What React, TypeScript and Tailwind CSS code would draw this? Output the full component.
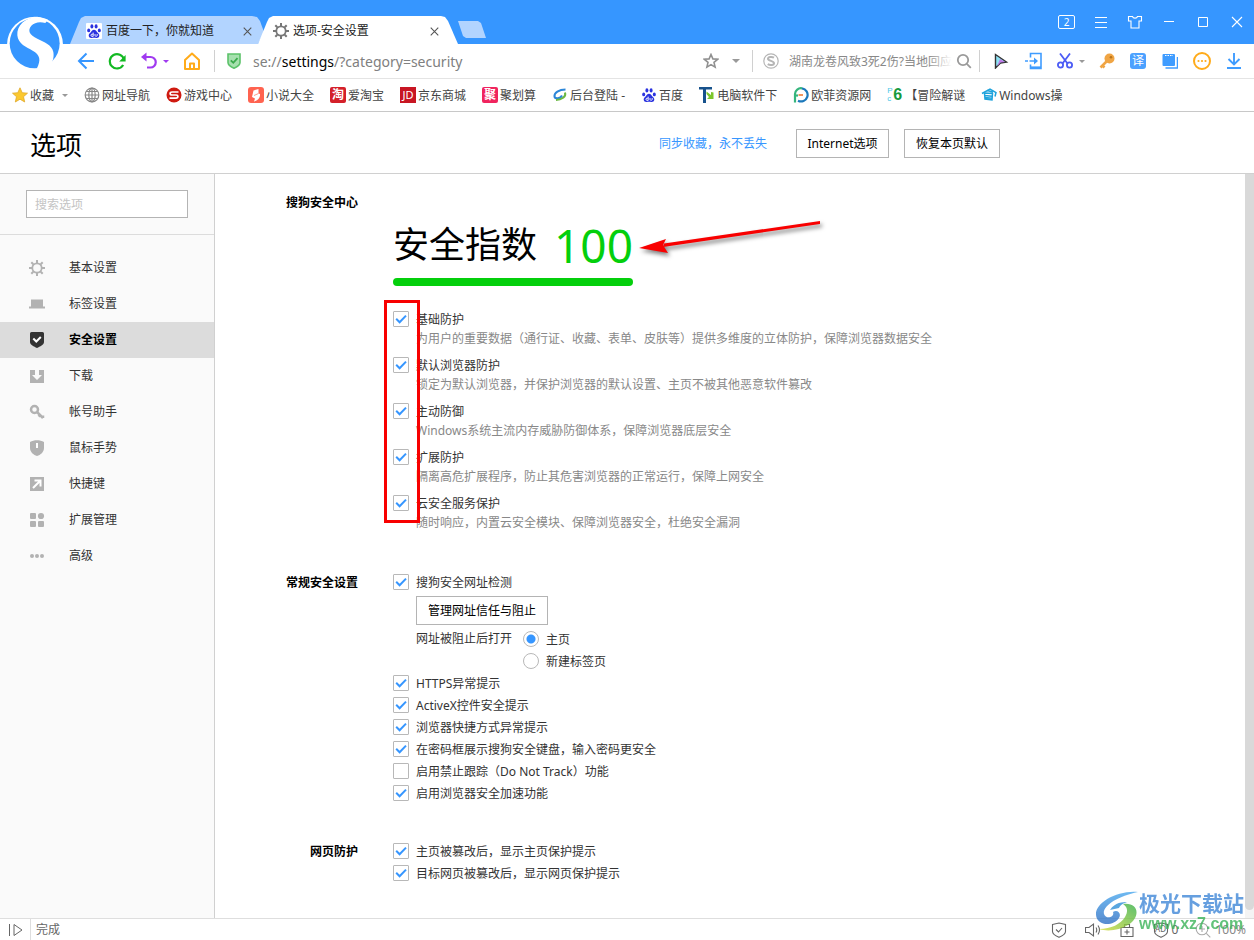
import { useState } from 'react';
import type { ReactNode } from 'react';

const BaiduPaw = () => (
  <svg viewBox="0 0 16 16" className="w-4 h-4 shrink-0">
    <rect width="16" height="16" rx="1" fill="#fff" />
    <g fill="#2a32df">
      <ellipse cx="2.7" cy="7.4" rx="1.5" ry="1.9" />
      <ellipse cx="5.9" cy="3.4" rx="1.5" ry="2.1" />
      <ellipse cx="10.1" cy="3.4" rx="1.5" ry="2.1" />
      <ellipse cx="13.3" cy="7.4" rx="1.5" ry="1.9" />
      <path d="M8 6.8c-1.6 0-2.2 1.4-3.2 2.4-1 1-2.3 2-2.1 3.6.2 1.8 1.8 2.4 3.2 2.1 1.4-.3 2.800-.3 4.200 0 1.400.3 3-.3 3.200-2.100.2-1.600-1.100-2.600-2.100-3.600C10.200 8.200 9.600 6.800 8 6.800z" />
    </g>
    <path d="M7.200 9.600v3.800H6c-1.400 0-1.400-2.200 0-2.200h1.200M9 11v1.600c0 .9 2.200.9 2.200 0V11" fill="none" stroke="#fff" strokeWidth=".9" />
  </svg>
);

const Gear = ({ className }: { className: string }) => (
  <svg viewBox="0 0 16 16" className={className} fill="none" stroke="currentColor">
    <circle cx="8" cy="8" r="4.700" strokeWidth="1.800" />
    <path d="M8 0v3M8 13v3M0 8h3M13 8h3M2.300 2.300l2 2M11.700 11.700l2 2M13.700 2.300l-2 2M4.300 11.700l-2 2" strokeWidth="2" />
  </svg>
);

const Caret = ({ className }: { className: string }) => (
  <svg viewBox="0 0 8 4" className={className} fill="currentColor">
    <path d="M0 0h8L4 4z" />
  </svg>
);

const CloseIcon = ({ className }: { className: string }) => (
  <svg viewBox="0 0 10 10" className={className} stroke="currentColor" strokeWidth="1.200">
    <path d="M.8.8l8.400 8.400M9.200.8L.8 9.200" />
  </svg>
);

const Logo = () => (
  <svg viewBox="0 0 240 210" className="absolute left-0 top-[10px] w-20 h-[70px] z-20">
    <circle cx="105" cy="104" r="84" fill="#fff" />
    <circle cx="104" cy="100" r="75" fill="#3696ff" />
    <path
      d="M112 20C74 24 50 46 52 76c2 26 28 36 46 46 22 12 26 28 12 54l32 0c16-14 21-34 18-50-4-22-28-30-48-40-24-11-30-25-18-39 9-10 26-13 42-8l8-10z"
      fill="#fff"
    />
  </svg>
);

const TitleBar = () => (
  <div className="h-11 bg-[#3696ff] flex items-end pl-[70px]">
    <div className="w-[194px] h-7 shrink-0 flex items-center pt-[2px] pl-4 pr-3 bg-[#b2d4ff] text-[#222] [clip-path:polygon(0_100%,9px_6px,11px_2px,15px_0,182px_0,187px_1px,190px_5px,194px_16px,188px_100%)]">
      <BaiduPaw />
      <span className="ml-1 flex-1">百度一下，你就知道</span>
      <button aria-label="关闭标签" className="text-[#555]"><CloseIcon className="w-[9px] h-[9px]" /></button>
    </div>
    <div className="w-[200px] h-7 shrink-0 -ml-[6px] z-10 flex items-center pt-[2px] pl-[15px] pr-[19px] bg-white text-[#222] [clip-path:polygon(0_100%,9px_6px,11px_2px,15px_0,183px_0,187px_1px,190px_5px,100%_100%)]">
      <Gear className="w-4 h-4 text-[#777]" />
      <span className="ml-1 flex-1">选项-安全设置</span>
      <button aria-label="关闭标签" className="text-[#555]"><CloseIcon className="w-[9px] h-[9px]" /></button>
    </div>
    <button aria-label="新建标签" className="w-7 h-[17px] mb-[6px] bg-[#b2d4ff] [clip-path:polygon(0_0,20px_0,23px_2px,100%_100%,8px_100%,5px_15px)]" />
    <div className="ml-auto self-start h-11 pr-[9px] flex items-center gap-[18px] text-white">
      <button className="w-[17px] h-[14px] border border-white rounded-[2px] text-[10px] leading-[12px]">2</button>
      <button aria-label="菜单">
        <svg viewBox="0 0 16 16" className="w-4 h-4" stroke="currentColor" strokeWidth="1"><path d="M2 3.500h12M2 8.500h12M2 13.500h12" /></svg>
      </button>
      <button aria-label="皮肤">
        <svg viewBox="0 0 16 16" className="w-4 h-4" fill="none" stroke="currentColor" strokeWidth="1.100">
          <path d="M5.500 2.500H1.500V7H4v7h8V7h2.500V2.500h-4c-.6 2.200-4.400 2.200-5 0z" />
        </svg>
      </button>
      <button aria-label="最小化">
        <svg viewBox="0 0 16 16" className="w-4 h-4" stroke="currentColor"><path d="M3 7.500h10" /></svg>
      </button>
      <button aria-label="最大化">
        <svg viewBox="0 0 16 16" className="w-4 h-4" fill="none" stroke="currentColor"><path d="M3.500 3.500h9v9h-9z" /></svg>
      </button>
      <button aria-label="关闭">
        <svg viewBox="0 0 16 16" className="w-4 h-4" stroke="currentColor" strokeWidth="1.100"><path d="M3 3l10 10M13 3L3 13" /></svg>
      </button>
    </div>
  </div>
);

const Toolbar = () => (
  <div className="h-[35px] border-b border-[#e4e4e4] bg-white flex items-center pl-[77px] pr-3">
    <button aria-label="后退">
      <svg viewBox="0 0 18 18" className="w-[18px] h-[18px]" fill="none" stroke="#3696ff" strokeWidth="2"><path d="M17 9H2M9.500 1.500L2 9l7.500 7.500" /></svg>
    </button>
    <button aria-label="刷新" className="ml-[13px]">
      <svg viewBox="0 0 18 18" className="w-[18px] h-[18px]">
        <path d="M16 7.500A7.200 7.200 0 1 0 15.200 13" fill="none" stroke="#12b922" strokeWidth="2.200" />
        <path d="M17.600 3v6.400h-6.400z" fill="#12b922" />
      </svg>
    </button>
    <button aria-label="撤销" className="ml-[14px]">
      <svg viewBox="0 0 18 18" className="w-[18px] h-[18px]">
        <path d="M4 5h6.500a5 5 0 0 1 0 10.500H7" fill="none" stroke="#a03af0" strokeWidth="2.200" />
        <path d="M1 5l5.500-4.500v9z" fill="#a03af0" />
      </svg>
    </button>
    <Caret className="w-[6px] h-[3px] ml-[5px] text-[#a03af0]" />
    <button aria-label="主页" className="ml-[14px]">
      <svg viewBox="0 0 18 18" className="w-[18px] h-[18px]" fill="none" stroke="#ffab1a" strokeWidth="2">
        <path d="M2 17V8l7-6.500L16 8v9zM7 17v-5.500h4V17" strokeLinejoin="round" />
      </svg>
    </button>
    <div className="w-px h-[22px] bg-[#d0d0d0] ml-[13px]" />
    <svg viewBox="0 0 14 16" className="w-[14px] h-4 ml-3 shrink-0">
      <path d="M1 1h12v8.500c0 3-3 4.500-6 5.700-3-1.200-6-2.700-6-5.700z" fill="#a6e0ae" stroke="#5cc26a" strokeWidth="1.600" />
      <path d="M3.800 7.300l2.500 2.500 4.200-4.600" fill="none" stroke="#3aa94b" strokeWidth="1.800" />
    </svg>
    <div className="ml-3 pt-px flex-1 text-sm text-[#808080] whitespace-nowrap">
      se://<span className="text-black">settings</span>/?category=security
    </div>
    <button aria-label="收藏本页">
      <svg viewBox="0 0 16 16" className="w-4 h-4" fill="none" stroke="#909090" strokeWidth="1.600">
        <path d="M8 1.500l1.900 4.400 4.700.4-3.600 3.100 1.100 4.700L8 11.600l-4.100 2.500L5 9.400 1.400 6.300l4.700-.4z" />
      </svg>
    </button>
    <Caret className="w-2 h-1 ml-[13px] text-[#999]" />
    <div className="w-px h-[22px] bg-[#d0d0d0] ml-3" />
    <svg viewBox="0 0 16 16" className="w-4 h-4 ml-[10px] shrink-0" fill="none" stroke="#b5b5b5">
      <circle cx="8" cy="8" r="7.200" strokeWidth="1.200" />
      <path d="M11 4.700C9 3.400 5 3.700 5 5.700c0 2.600 6 1.800 6 4.500 0 2.200-4 2.400-6.300 1" strokeWidth="2" />
    </svg>
    <div className="relative ml-[10px] w-[163px]">
      <input
        aria-label="搜索"
        placeholder="湖南龙卷风致3死2伤?当地回应"
        className="w-full h-6 text-xs outline-none placeholder:text-[#888]"
      />
      <div className="absolute right-0 top-0 w-6 h-6 bg-gradient-to-r from-transparent to-white" />
    </div>
    <button aria-label="搜索" className="ml-1">
      <svg viewBox="0 0 16 16" className="w-4 h-4" fill="none" stroke="#9a9a9a" strokeWidth="1.800">
        <circle cx="7" cy="7" r="5.200" />
        <path d="M10.800 10.800l4 4" />
      </svg>
    </button>
    <div className="w-px h-[22px] bg-[#d0d0d0] ml-[7px]" />
    <button aria-label="鼠标手势" className="ml-[13px]">
      <svg viewBox="0 0 16 16" className="w-4 h-4">
        <path d="M2.500 1.500l11 7.500-6 1-5 5z" fill="#8ee3f5" stroke="#333" strokeWidth="1.400" />
        <path d="M7 6l5 3-4.500.5-3.500 4z" fill="#c07ae8" />
      </svg>
    </button>
    <button aria-label="发送到手机" className="ml-4">
      <svg viewBox="0 0 18 18" className="w-[18px] h-[18px]" fill="none" stroke="#3f9cff" strokeWidth="1.600">
        <path d="M5.500 5.500V1.500h10.500v15H5.500V12.500M4.500 9h6M0 9h3" />
        <path d="M9 5.500l4 3.500-4 3.500z" fill="#3f9cff" stroke="none" />
        <path d="M5.500 15.200h10.500" />
      </svg>
    </button>
    <button aria-label="截图" className="ml-[14px]">
      <svg viewBox="0 0 16 16" className="w-4 h-4" fill="none" stroke="#4c5cf5" strokeWidth="1.800">
        <circle cx="3.500" cy="12" r="2.600" />
        <circle cx="12.500" cy="12" r="2.600" />
        <path d="M3 .5l7.500 10M13 .5l-7.500 10" />
      </svg>
    </button>
    <Caret className="w-[6px] h-[3px] ml-[6px] text-[#999]" />
    <button aria-label="密码" className="ml-[14px]">
      <svg viewBox="0 0 16 16" className="w-4 h-4">
        <circle cx="10.500" cy="5.500" r="5" fill="#f0a544" />
        <circle cx="12" cy="4.200" r="1.300" fill="#b8741c" />
        <path d="M7.500 8.500L1.500 14.500M3.500 12.500l2 2" stroke="#f0a544" strokeWidth="2.600" />
      </svg>
    </button>
    <button className="ml-[15px] w-4 h-4 rounded-[3px] bg-[#4ba1ff] text-white text-xs leading-4">译</button>
    <button aria-label="便签" className="ml-4">
      <svg viewBox="0 0 16 16" className="w-4 h-4">
        <path d="M3.500 15h12V4" fill="none" stroke="#3f9cff" strokeWidth="1.500" />
        <rect x=".5" y="1" width="12.500" height="12" rx="1" fill="#3f9cff" />
        <path d="M3 2.500h8" stroke="#fff" strokeDasharray="1.500 1" />
      </svg>
    </button>
    <button aria-label="更多" className="ml-[15px]">
      <svg viewBox="0 0 18 18" className="w-[18px] h-[18px]">
        <circle cx="9" cy="9" r="8" fill="none" stroke="#ffab1a" strokeWidth="2" />
        <g fill="#ffab1a"><circle cx="5.500" cy="9" r="1.100" /><circle cx="9" cy="9" r="1.100" /><circle cx="12.500" cy="9" r="1.100" /></g>
      </svg>
    </button>
    <button aria-label="下载" className="ml-[15px]">
      <svg viewBox="0 0 16 16" className="w-4 h-4" fill="none" stroke="#3f9cff" strokeWidth="1.900"><path d="M8 0v11M2.500 6L8 11.500 13.500 6M1 15h14" /></svg>
    </button>
  </div>
);

const bookmarks: { name: string; icon: ReactNode }[] = [
  {
    name: '网址导航',
    icon: (
      <svg viewBox="0 0 16 16" className="w-4 h-4" fill="none" stroke="#888" strokeWidth="1.200">
        <circle cx="8" cy="8" r="6.800" /><ellipse cx="8" cy="8" rx="3.200" ry="6.800" /><path d="M1 8h14M8 1v14M2.300 4.500h11.400M2.300 11.500h11.400" />
      </svg>
    ),
  },
  {
    name: '游戏中心',
    icon: (
      <svg viewBox="0 0 16 16" className="w-4 h-4">
        <circle cx="8" cy="8" r="7.500" fill="#cf1a10" />
        <path d="M12.500 5H6C3.500 5 3.500 8 6 8h4c2.500 0 2.500 3.200 0 3.200H3.500" fill="none" stroke="#fff" strokeWidth="1.700" />
      </svg>
    ),
  },
  {
    name: '小说大全',
    icon: (
      <svg viewBox="0 0 16 16" className="w-4 h-4">
        <rect width="16" height="16" rx="3" fill="#ff6350" />
        <path d="M5.500 3.500l5-1.500v4.500l1.500.5c.3 4-2 6-6 7.500l1-3-3-1.500z" fill="#fff" />
        <path d="M6 8.500l4.500-2" stroke="#ff9a8a" />
      </svg>
    ),
  },
  { name: '爱淘宝', icon: <span className="w-4 h-4 rounded-[2px] bg-[#d4202a] text-white text-xs leading-4 text-center font-bold">淘</span> },
  { name: '京东商城', icon: <span className="w-4 h-4 bg-[#c81623] text-white text-[11px] leading-4 text-center">JD</span> },
  { name: '聚划算', icon: <span className="w-4 h-4 rounded-[2px] bg-[#f0245e] text-white text-xs leading-4 text-center font-bold">聚</span> },
  {
    name: '后台登陆 -',
    icon: (
      <svg viewBox="0 0 16 16" className="w-4 h-4" fill="none">
        <path d="M13.500 2.500C7 2.500 2 6 2.500 9.500c.4 2.500 6 2.500 7.500-1" stroke="#2c86d8" strokeWidth="2" />
        <path d="M13 5.500c1.500 4-3.500 7.500-9 7.500" stroke="#6cb843" strokeWidth="2" />
      </svg>
    ),
  },
  { name: '百度', icon: <BaiduPaw /> },
  {
    name: '电脑软件下',
    icon: (
      <svg viewBox="0 0 16 16" className="w-4 h-4">
        <path d="M0 0h13v2.500H7V16H4V2.500H0z" fill="#17528c" />
        <path d="M7.500 4.500L12 8V5l2.500.5V12H8l2-2-2.500-3z" fill="#7cc62c" />
      </svg>
    ),
  },
  {
    name: '欧菲资源网',
    icon: (
      <svg viewBox="0 0 16 16" className="w-4 h-4" fill="none" strokeWidth="2.200">
        <path d="M2 15.500V7a6 6 0 0 1 7-5.700" stroke="#35b57c" />
        <path d="M9 1.300a6.600 6.600 0 1 1-4 12.400" stroke="#1c78bb" />
        <path d="M2 8.500h3" stroke="#35b57c" /><path d="M5.500 8h4.500" stroke="#f08a4b" strokeWidth="1.800" />
      </svg>
    ),
  },
  {
    name: '【冒险解谜',
    icon: (
      <span className="w-4 h-4 flex font-['Liberation_Sans',sans-serif]">
        <span className="flex flex-col w-[6px] text-[8px] leading-[8px] text-[#4cc7e8]">
          <span>P</span>
          <span>c</span>
        </span>
        <span className="text-base leading-4 font-bold text-[#159a3c]">6</span>
      </span>
    ),
  },
  {
    name: 'Windows操',
    icon: (
      <svg viewBox="0 0 16 16" className="w-4 h-4" fill="none" stroke="#1ea3dc" strokeWidth="1.500">
        <path d="M1 6.500L9 2l6 3.500-1 4" />
        <path d="M3.500 6l8 .5-.5 6.500-7-1zM4 8.500l7 .8M4 10.500l7 .8M6 3.500l6 1.500" />
      </svg>
    ),
  },
];

const BookmarkBar = () => (
  <nav className="h-[33px] border-b border-[#c8c8c8] bg-white flex items-center gap-4 pl-3 text-[#444] whitespace-nowrap overflow-hidden">
    <button className="flex items-center gap-[2px]">
      <svg viewBox="0 0 16 16" className="w-4 h-4" fill="#fbc82f" stroke="#e0a82a" strokeWidth=".8">
        <path d="M8 .8l2.200 4.900 5.300.5-4 3.500 1.200 5.300L8 12.200 3.300 15l1.200-5.300-4-3.500 5.300-.5z" />
      </svg>
      <span className="pt-[2px]">收藏</span>
      <Caret className="w-[6px] h-[3px] ml-[6px] text-[#999]" />
    </button>
    {bookmarks.map((b) => (
      <a key={b.name} href="#" className="flex items-center gap-[2px] shrink-0">
        {b.icon}
        <span className="pt-[2px]">{b.name}</span>
      </a>
    ))}
  </nav>
);

const menu: { name: string; icon: ReactNode }[] = [
  { name: '基本设置', icon: <Gear className="w-4 h-4" /> },
  {
    name: '标签设置',
    icon: <svg viewBox="0 0 16 16" className="w-4 h-4" fill="currentColor"><path d="M2 3.500h12v7h2v2H0v-2h2z" /></svg>,
  },
  {
    name: '安全设置',
    icon: (
      <svg viewBox="0 0 16 16" className="w-4 h-4">
        <path d="M1 1.500Q1 0 2.500 0h11Q15 0 15 1.500V10c0 3-4 4.500-7 6-3-1.500-7-3-7-6z" fill="currentColor" />
        <path d="M4.300 6.500l3 3 4.500-4.500" fill="none" stroke="#fff" strokeWidth="2" />
      </svg>
    ),
  },
  {
    name: '下载',
    icon: <svg viewBox="0 0 16 16" className="w-4 h-4" fill="currentColor"><path d="M1 2h5v5H3l5 5 5-5h-3V2h5v13H1z" /></svg>,
  },
  {
    name: '帐号助手',
    icon: (
      <svg viewBox="0 0 16 16" className="w-4 h-4" fill="none" stroke="currentColor" strokeWidth="2.500">
        <circle cx="5.500" cy="5.500" r="3.500" /><path d="M8 8l6 6M14 14v-2.500M11 11l-1.500 1.500" />
      </svg>
    ),
  },
  {
    name: '鼠标手势',
    icon: (
      <svg viewBox="0 0 16 16" className="w-4 h-4">
        <path d="M1 2c4-2.500 10-2.500 14 0v6c0 4-3.500 7-7 8-3.500-1-7-4-7-8z" fill="currentColor" /><path d="M8 3v5" stroke="#fff" strokeWidth="2" />
      </svg>
    ),
  },
  {
    name: '快捷键',
    icon: (
      <svg viewBox="0 0 16 16" className="w-4 h-4">
        <path d="M1 1h14v14H1z" fill="currentColor" /><path d="M4 12l7-7M5.500 4.500h6v6" fill="none" stroke="#fff" strokeWidth="2" />
      </svg>
    ),
  },
  {
    name: '扩展管理',
    icon: (
      <svg viewBox="0 0 16 16" className="w-4 h-4" fill="currentColor">
        <rect x="1" y="1" width="6" height="6" rx="1" /><circle cx="12" cy="4" r="3.100" />
        <rect x="1" y="9" width="6" height="6" rx="1" /><rect x="9" y="9" width="6" height="6" rx="1" />
      </svg>
    ),
  },
  {
    name: '高级',
    icon: (
      <svg viewBox="0 0 16 16" className="w-4 h-4" fill="currentColor">
        <circle cx="3" cy="8" r="2" /><circle cx="8" cy="8" r="2" /><circle cx="13" cy="8" r="2" />
      </svg>
    ),
  },
];

const Sidebar = () => {
  const [active, setActive] = useState('安全设置');
  return (
    <aside className="w-[215px] shrink-0 bg-[#fafafa] border-r border-[#d0d0d0]">
      <div className="h-[61px] pt-4 pl-[26px] border-b border-[#dcdcdc]">
        <input
          aria-label="搜索选项"
          placeholder="搜索选项"
          className="w-[162px] h-7 px-2 bg-white border border-[#b4b4b4] outline-none placeholder:text-[#c4c4c4]"
        />
      </div>
      <nav className="pt-[15px]">
        {menu.map((m) => (
          <button
            key={m.name}
            onClick={() => setActive(m.name)}
            className={`w-full h-9 pl-[29px] flex items-center gap-6 ${m.name === active ? 'bg-[#dcdcdc] text-black font-bold' : 'text-[#333]'}`}
          >
            <span className={m.name === active ? 'text-[#333]' : 'text-[#b2b2b2]'}>{m.icon}</span>
            {m.name}
          </button>
        ))}
      </nav>
    </aside>
  );
};

const Check = ({ label, checked = true }: { label: string; checked?: boolean }) => (
  <label className="h-[22px] flex items-center gap-[7px] text-[#333]">
    <span className="relative w-4 h-4 shrink-0">
      <input type="checkbox" defaultChecked={checked} className="peer block appearance-none w-4 h-4 bg-white border border-[#b8b8b8] rounded-[1px]" />
      <svg viewBox="0 0 16 16" className="absolute inset-0 w-4 h-4 hidden peer-checked:block pointer-events-none" fill="none" stroke="#3696ff" strokeWidth="2">
        <path d="M3.200 7.800l3.400 3.400 6.400-6.600" />
      </svg>
    </span>
    <span className="pt-[2px]">{label}</span>
  </label>
);

const Radio = ({ label, checked = false }: { label: string; checked?: boolean }) => (
  <label className="h-[22px] flex items-center gap-[7px] text-[#333]">
    <input
      type="radio"
      name="blocked"
      defaultChecked={checked}
      className="appearance-none w-4 h-4 rounded-full bg-white border border-[#b8b8b8] checked:bg-[radial-gradient(circle,#3696ff_0_4px,white_5px)]"
    />
    <span className="pt-px">{label}</span>
  </label>
);

const Section = ({ title, children }: { title: string; children: ReactNode }) => (
  <section className="flex gap-[35px]">
    <h2 className="w-[143px] pt-px shrink-0 text-right font-bold text-black leading-[22px]">{title}</h2>
    <div className="min-w-0">{children}</div>
  </section>
);

const protections = [
  { name: '基础防护', desc: '为用户的重要数据（通行证、收藏、表单、皮肤等）提供多维度的立体防护，保障浏览器数据安全' },
  { name: '默认浏览器防护', desc: '锁定为默认浏览器，并保护浏览器的默认设置、主页不被其他恶意软件篡改' },
  { name: '主动防御', desc: 'Windows系统主流内存威胁防御体系，保障浏览器底层安全' },
  { name: '扩展防护', desc: '隔离高危扩展程序，防止其危害浏览器的正常运行，保障上网安全' },
  { name: '云安全服务保护', desc: '随时响应，内置云安全模块、保障浏览器安全，杜绝安全漏洞' },
];

const Settings = () => (
  <main className="flex-1 min-w-0 pt-[17px] pb-8 bg-white">
    <Section title="搜狗安全中心">
      <div className="relative mt-7 w-60 h-[52px] flex items-center justify-between text-black whitespace-nowrap">
        <span className="text-4xl">安全指数</span>
        <span className="text-[46px] leading-none text-[#04cf0c]">100</span>
        {/* arrow pointing at the score */}
        <svg viewBox="0 0 190 44" className="absolute left-[243px] top-[-4px] w-[190px] h-11 overflow-visible [filter:drop-shadow(2px_3px_2px_rgba(0,0,0,0.5))]">
          <path d="M184 6L28 28.500l-1 3.500L184 9z" fill="#f80000" />
          <path d="M3 33l27-9-3 6 5 8z" fill="#f80000" />
        </svg>
      </div>
      <div className="mt-[7px] w-60 h-2 rounded-full bg-[#04cf0c]" />
      <div className="relative mt-[22px] flex flex-col gap-[6px]">
        {protections.map((p) => (
          <div key={p.name}>
            <Check label={p.name} />
            <p className="pl-[23px] leading-[18px] text-[#888]">{p.desc}</p>
          </div>
        ))}
        <div className="absolute -left-[9px] -top-[8px] w-9 h-[223px] border-[3px] border-[#f80000] pointer-events-none" />
      </div>
    </Section>

    <div className="mt-[39px]">
      <Section title="常规安全设置">
        <Check label="搜狗安全网址检测" />
        <button className="block ml-[23px] my-[3px] h-[29px] w-[132px] border border-[#b4b4b4] bg-white text-black">管理网址信任与阻止</button>
        <div className="ml-[23px] flex gap-[11px] text-[#333]">
          <span className="leading-[22px]">网址被阻止后打开</span>
          <div>
            <Radio label="主页" checked />
            <Radio label="新建标签页" />
          </div>
        </div>
        <Check label="HTTPS异常提示" />
        <Check label="ActiveX控件安全提示" />
        <Check label="浏览器快捷方式异常提示" />
        <Check label="在密码框展示搜狗安全键盘，输入密码更安全" />
        <Check label="启用禁止跟踪（Do Not Track）功能" checked={false} />
        <Check label="启用浏览器安全加速功能" />
      </Section>
    </div>

    <div className="mt-9">
      <Section title="网页防护">
        <Check label="主页被篡改后，显示主页保护提示" />
        <Check label="目标网页被篡改后，显示网页保护提示" />
      </Section>
    </div>
  </main>
);

const StatusBar = () => (
  <footer className="h-[22px] shrink-0 border-t border-[#dedede] bg-white flex items-center text-[#666]">
    <button aria-label="侧边栏" className="w-[31px] h-full flex items-center pl-2 border-r border-[#dedede]">
      <svg viewBox="0 0 16 16" className="w-4 h-4" fill="none" stroke="#666"><path d="M1.500 2v12M6 2.500v11L14 8z" /></svg>
    </button>
    <span className="ml-[5px] flex-1">完成</span>
    <div className="flex items-center pr-2">
      <svg viewBox="0 0 16 16" className="w-4 h-4" fill="none" stroke="#666" strokeWidth="1.100">
        <path d="M1.500 2.500L8 1l6.500 1.500v7C14.500 12.500 11 14 8 15.300 5 14 1.500 12.500 1.500 9.500zM5 7.500l2.500 2.500L11 6" />
      </svg>
      <svg viewBox="0 0 16 16" className="w-4 h-4 ml-[18px]" fill="none" stroke="#666" strokeWidth="1.100">
        <path d="M.5 5.500H4L8.500 2v12L4 10.500H.5zM11 5.500q1.500 2.500 0 5M13 3.500q3 4.500 0 9" />
      </svg>
      <svg viewBox="0 0 16 16" className="w-4 h-4 ml-[18px]" fill="none" stroke="#666" strokeWidth="1.100">
        <path d="M2 5.500h12v9H2zM5.500 5.500v-3h5v3M8 7.500v5M5.500 10h5" />
      </svg>
      <span className="relative w-4 h-4 ml-[18px] flex items-center justify-center text-[8px]">
        <svg viewBox="0 0 16 16" className="absolute inset-0 w-4 h-4" fill="none" stroke="#666" strokeWidth="1.100">
          <path d="M1.500 2.500L8 1l6.500 1.500v7C14.500 12.500 11 14 8 15.300 5 14 1.500 12.500 1.500 9.500z" />
        </svg>
        AD
      </span>
      <span className="ml-[3px]">0</span>
      <svg viewBox="0 0 16 16" className="w-4 h-4 ml-[17px]" fill="none" stroke="#aaa" strokeWidth="1.100">
        <circle cx="7" cy="7" r="5.800" /><path d="M11.300 11.300l4 4M4 7h6M7 4v6" />
      </svg>
      <span className="ml-1 text-[#888]">100%</span>
    </div>
  </footer>
);

const Watermark = () => (
  <div className="absolute right-[10px] bottom-[7px] z-20 flex items-center opacity-80 pointer-events-none">
    <svg viewBox="0 0 44 42" className="w-11 h-[42px]">
      <defs>
        <linearGradient id="swoosh" x1="0" y1="0" x2="0" y2="1">
          <stop offset="0" stopColor="#4aa8ee" />
          <stop offset="1" stopColor="#2f6fc4" />
        </linearGradient>
        <linearGradient id="leaf" x1="1" y1="0" x2="0" y2="1">
          <stop offset="0" stopColor="#35b04a" />
          <stop offset="1" stopColor="#d8dc3a" />
        </linearGradient>
      </defs>
      <path d="M43 1C22-1 0 12 1 24c1 11 17 12 23 3 3-5-2-9-6-6 2 5-7 8-9 2C7 15 23 5 43 1z" fill="url(#swoosh)" />
      <path d="M28 13c16-2 18 13 5 21C25 39 13 41 4 38c12 0 22-5 26-12 3-5 3-10-2-13z" fill="url(#leaf)" />
      <path d="M15 19c5-8 13-8 17-8-3 1-7 3-8 6z" fill="#2f8fd8" />
    </svg>
    <div className="font-bold whitespace-nowrap">
      <div className="text-[21px] leading-6 text-[#4088d8]">极光下载站</div>
      <div className="text-base leading-[18px] text-[#3cb35a] font-['Liberation_Sans',sans-serif]">www.xz7.com</div>
    </div>
  </div>
);

export default function App() {
  return (
    <div className="relative min-h-screen flex flex-col bg-white text-xs overflow-hidden font-['Noto_Sans','Noto_Sans_CJK_SC',sans-serif]">
      <Logo />
      <TitleBar />
      <Toolbar />
      <BookmarkBar />
      <header className="h-[62px] border-b border-[#d0d0d0]">
        <div className="h-full max-w-[1000px] pt-[2px] pl-[30px] flex items-center">
          <h1 className="pt-1 text-[26px] text-black flex-1">选项</h1>
          <a href="#" className="text-[#3696ff] mr-[29px]">同步收藏，永不丢失</a>
          <button className="h-[29px] w-[93px] border border-[#b4b4b4] text-black">Internet选项</button>
          <button className="h-[29px] w-24 ml-[15px] border border-[#b4b4b4] text-black">恢复本页默认</button>
        </div>
      </header>
      <div className="flex-1 flex">
        <Sidebar />
        <Settings />
        <div className="w-[9px] shrink-0 bg-[#f4f4f4] pb-2">
          <div className="h-full rounded-b-full bg-[#d9d9d9]" />
        </div>
      </div>
      <StatusBar />
      <Watermark />
    </div>
  );
}
